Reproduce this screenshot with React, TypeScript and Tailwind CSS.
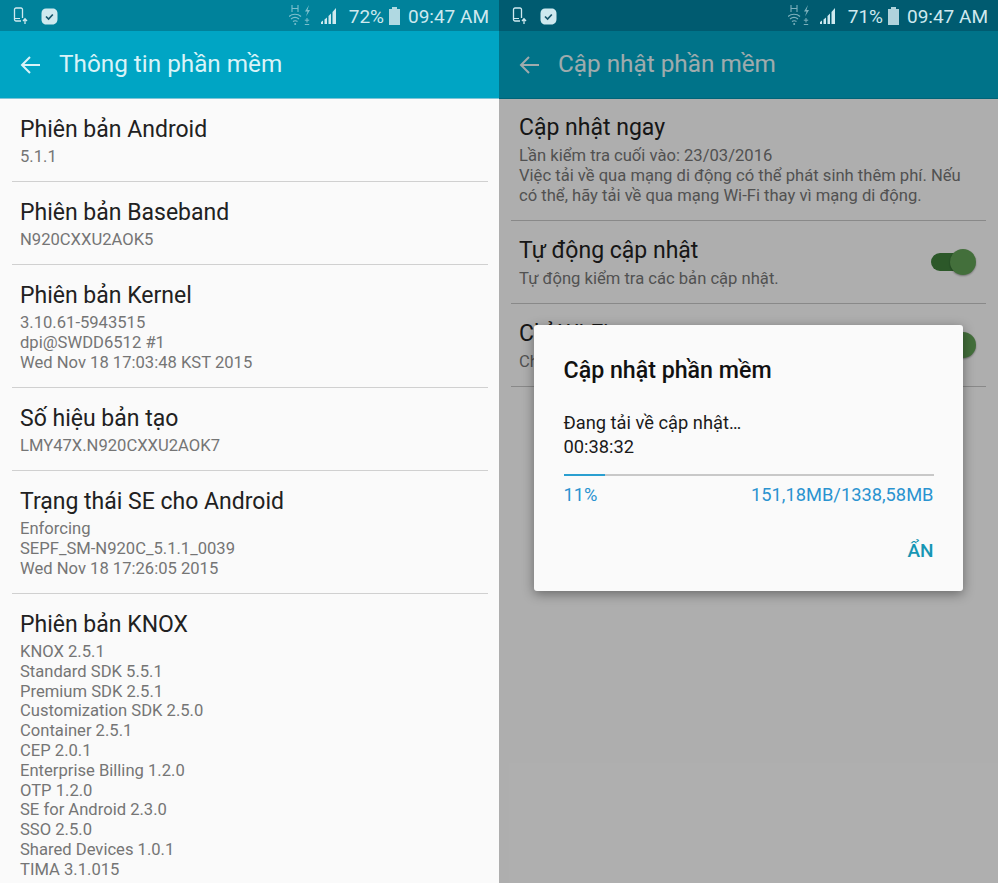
const FONT = { fontFamily: "Roboto, 'Noto Sans', sans-serif" };

type Row = { title: string; lines: string[]; height: string };

const INFO_ROWS: Row[] = [
  { title: "Phiên bản Android", lines: ["5.1.1"], height: "h-[83px]" },
  { title: "Phiên bản Baseband", lines: ["N920CXXU2AOK5"], height: "h-[83px]" },
  {
    title: "Phiên bản Kernel",
    lines: ["3.10.61-5943515", "dpi@SWDD6512 #1", "Wed Nov 18 17:03:48 KST 2015"],
    height: "h-[123px]",
  },
  { title: "Số hiệu bản tạo", lines: ["LMY47X.N920CXXU2AOK7"], height: "h-[83px]" },
  {
    title: "Trạng thái SE cho Android",
    lines: ["Enforcing", "SEPF_SM-N920C_5.1.1_0039", "Wed Nov 18 17:26:05 2015"],
    height: "h-[123px]",
  },
  {
    title: "Phiên bản KNOX",
    lines: [
      "KNOX 2.5.1",
      "Standard SDK 5.5.1",
      "Premium SDK 2.5.1",
      "Customization SDK 2.5.0",
      "Container 2.5.1",
      "CEP 2.0.1",
      "Enterprise Billing 1.2.0",
      "OTP 1.2.0",
      "SE for Android 2.3.0",
      "SSO 2.5.0",
      "Shared Devices 1.0.1",
      "TIMA 3.1.015",
    ],
    height: "h-[290px]",
  },
];

function StatusBar({ percent, className }: { percent: string; className: string }) {
  return (
    <div className={`h-[31px] shrink-0 pt-[1px] flex items-center pl-[13px] pr-[10px] text-[#cfe9ef] ${className}`}>
      <svg width="15" height="18" viewBox="0 0 15 18" fill="none" stroke="currentColor" className="mr-[13px]">
        <path d="M9.500 11V2.500A1.500 1.500 0 0 0 8 1H3a1.500 1.500 0 0 0-1.500 1.500v10A1.500 1.500 0 0 0 3 14h5" strokeWidth="1.300" />
        <path d="M2 11.500h5" strokeWidth="1" />
        <path d="M12 17v-5M10 14l2-2.200 2 2.200" strokeWidth="1.300" />
      </svg>
      <svg width="17" height="17" viewBox="0 0 17 17">
        <path d="M5 .5h6.500c3 0 5 2 5 5V11c0 3.200-2 5.500-5 5.500H5C2 16.500.5 14 .5 11.500V5C.5 2.500 2.500.5 5 .5z" fill="currentColor" />
        <path d="M5 8.500l2.600 2.600 4.200-4.600" fill="none" stroke="#17566b" strokeWidth="1.700" />
      </svg>
      <div className="flex-1" />
      <svg width="21" height="24" viewBox="0 0 21 24" fill="none" className="opacity-60 mr-[11px]">
        <path d="M3 1v7M9 1v7M3 4.500h6" stroke="currentColor" strokeWidth="1.100" />
        <path d="M0 12.500c3-3 9-3 12 0M2 15c2.500-2 5.500-2 8 0M4 17.500c1.500-1 3-1 4.500 0" stroke="currentColor" strokeWidth="1.200" />
        <circle cx="6.200" cy="20" r="1" fill="currentColor" />
        <path d="M20 1l-4 6.500h2.500l-1.500 5 4-6.500h-2.500z" fill="currentColor" />
        <path d="M18 14v4.500M15.800 16.200h4.400M15.800 20.500h4.400" stroke="currentColor" strokeWidth="1" />
      </svg>
      <svg width="15" height="16" viewBox="0 0 15 16" fill="currentColor" className="mr-[13px]">
        <path d="M0 14l2-1.500V16H0zM3.500 11.500L6 9.500V16H3.500zM7.500 8L10 5.500V16H7.500zM11.500 4L15 0v16h-3.500z" />
      </svg>
      <span className="text-[19px] leading-none">{percent}</span>
      <svg width="11" height="18" viewBox="0 0 11 18" fill="currentColor" className="ml-[5px] mr-[8px] opacity-85">
        <path d="M3 0h5v2h3v16H0V2h3z" />
      </svg>
      <span className="text-[19px] leading-none">09:47 AM</span>
    </div>
  );
}

function TitleBar({ title, className, textClass }: { title: string; className: string; textClass: string }) {
  return (
    <div className={`h-[68px] shrink-0 flex items-center pl-[20px] ${className} ${textClass}`}>
      <svg width="20" height="20" viewBox="0 0 20 20" fill="none" stroke="currentColor" strokeWidth="2">
        <path d="M20 10H2M10 2l-8 8 8 8" />
      </svg>
      <span className="ml-[19px] text-[24.300px] leading-none">{title}</span>
    </div>
  );
}

function Toggle() {
  return (
    <div className="relative w-[45px] h-[26px] shrink-0 mr-[2px]">
      <div className="absolute left-0 top-[4px] w-[36px] h-[18px] rounded-full bg-[#3f7f3c]" />
      <div className="absolute right-0 top-0 w-[26px] h-[26px] rounded-full bg-[#619f55] shadow-[0_1px_2px_rgba(0,0,0,0.35)]" />
    </div>
  );
}

function SettingRow({ title, sub, height, top, toggle }: { title: string; sub: string[]; height: string; top: string; toggle?: boolean }) {
  return (
    <div className={`mx-[12px] px-[8px] shrink-0 border-b border-[#c4c4c4] flex items-start ${height}`}>
      <div className={`flex-1 min-w-0 ${top}`}>
        <div className="text-[23px] leading-[30px] text-[#212121]">{title}</div>
        <div className="mt-[3px]">
          {sub.map((s) => (
            <div key={s} className="text-[16.600px] leading-[20px] text-[#757575] whitespace-nowrap">
              {s}
            </div>
          ))}
        </div>
      </div>
      {toggle && (
        <div className="self-center">
          <Toggle />
        </div>
      )}
    </div>
  );
}

export default function App() {
  return (
    <div className="w-[998px] h-[883px] overflow-hidden flex" style={FONT}>
      {/* left phone */}
      <div className="w-[499px] h-full bg-[#fafafa] flex flex-col overflow-hidden">
        <StatusBar percent="72%" className="bg-[#00829b]" />
        <TitleBar title="Thông tin phần mềm" className="bg-[#00a5c4] border-b border-[#7fc4d6]" textClass="text-[#d9f3f8]" />
        {INFO_ROWS.map((row, i) => (
          <div
            key={row.title}
            className={`ml-[12px] mr-[11px] px-[8px] shrink-0 ${row.height} ${i < INFO_ROWS.length - 1 ? "border-b border-[#d0d0d0]" : ""}`}
          >
            <div className="pt-[16px] text-[23px] leading-[30px] text-[#212121]">{row.title}</div>
            <div className="mt-[2px]">
              {row.lines.map((line) => (
                <div key={line} className="text-[16.600px] leading-[19.800px] text-[#757575]">
                  {line}
                </div>
              ))}
            </div>
          </div>
        ))}
      </div>

      {/* right phone */}
      <div className="relative w-[499px] h-full bg-[#fafafa] flex flex-col overflow-hidden">
        <StatusBar percent="71%" className="bg-[#005b70]" />
        <TitleBar title="Cập nhật phần mềm" className="bg-[#00a5c4] border-b border-[#0090ac]" textClass="text-[#e4f5f8]" />
        <SettingRow
          title="Cập nhật ngay"
          height="h-[122px]"
          top="pt-[14px]"
          sub={[
            "Lần kiểm tra cuối vào: 23/03/2016",
            "Việc tải về qua mạng di động có thể phát sinh thêm phí. Nếu",
            "có thể, hãy tải về qua mạng Wi-Fi thay vì mạng di động.",
          ]}
        />
        <SettingRow title="Tự động cập nhật" height="h-[83px]" top="pt-[15px]" sub={["Tự động kiểm tra các bản cập nhật."]} toggle />
        <SettingRow title="Chỉ Wi-Fi" height="h-[83px]" top="pt-[15px]" sub={["Chỉ tải về qua Wi-Fi"]} toggle />

        {/* scrim */}
        <div className="absolute left-0 right-0 top-[31px] bottom-0 bg-black/30" />

        {/* dialog */}
        <div className="absolute left-[35px] top-[325px] w-[429px] h-[266px] bg-[#fafafa] rounded-[3px] shadow-[0_3px_12px_rgba(0,0,0,0.4)] pt-[30px] px-[29.500px]">
          <div className="text-[23.200px] leading-[30px] font-medium text-[#111]">Cập nhật phần mềm</div>
          <div className="mt-[26px] text-[18.300px] leading-[24px] text-[#1a1a1a]">Đang tải về cập nhật…</div>
          <div className="text-[18.300px] leading-[24px] text-[#1a1a1a]">00:38:32</div>
          <div className="mt-[15px] h-[2px] bg-[#c8c8c8]">
            <div className="h-full w-[41px] bg-[#2a9fd0]" />
          </div>
          <div className="mt-[7px] flex justify-between text-[18.300px] leading-[24px] text-[#2a93d0]">
            <span>11%</span>
            <span>151,18MB/1338,58MB</span>
          </div>
          <div className="mt-[32px] text-right text-[19px] leading-[24px] font-medium text-[#1796b4]">ẨN</div>
        </div>
      </div>
    </div>
  );
}
